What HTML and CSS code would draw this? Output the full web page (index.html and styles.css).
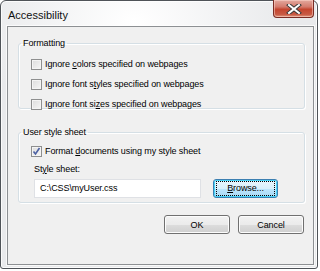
FILE: index.html
```html
<!DOCTYPE html>
<html lang="en">
<head>
    <meta charset="UTF-8">
    <title>Accessibility</title>
    <link rel="stylesheet" href="styles.css">
</head>
<body>
    <!-- Dialog window -->
    <div class="window">
        <div class="titlebar">
            <span class="title">Accessibility</span>
            <button class="close" type="button" aria-label="Close">
                <svg width="16" height="10" viewBox="0 0 16 10">
                    <path d="M3 1 L13 9 M13 1 L3 9" stroke="#3a3a3a" stroke-width="4" stroke-linecap="square"/>
                    <path d="M3 1 L13 9 M13 1 L3 9" stroke="#ffffff" stroke-width="2" stroke-linecap="square"/>
                </svg>
            </button>
        </div>

        <div class="client">
            <fieldset class="group group-format">
                <legend>Formatting</legend>
                <label class="check-row"><span class="box"></span><span class="text">Ignore <u>c</u>olors specified on webpages</span></label>
                <label class="check-row"><span class="box"></span><span class="text">Ignore font s<u>t</u>yles specified on webpages</span></label>
                <label class="check-row"><span class="box"></span><span class="text">Ignore font si<u>z</u>es specified on webpages</span></label>
            </fieldset>

            <fieldset class="group group-user">
                <legend>User style sheet</legend>
                <label class="check-row"><span class="box checked">
                    <svg width="9" height="9" viewBox="0 0 9 9"><path d="M1.5 4.5 L3.5 7 L7.5 1" fill="none" stroke="#4c61a3" stroke-width="1.6"/></svg>
                </span><span class="text">Format <u>d</u>ocuments using my style sheet</span></label>
                <div class="sheet">
                    <div class="sheet-label">St<u>y</u>le sheet:</div>
                    <div class="sheet-row">
                        <div class="textbox">C:\CSS\myUser.css</div>
                        <button class="btn btn-focus" type="button"><span class="focus-ring"><u>B</u>rowse...</span></button>
                    </div>
                </div>
            </fieldset>

            <div class="actions">
                <button class="btn" type="button">OK</button>
                <button class="btn" type="button">Cancel</button>
            </div>
        </div>
    </div>
</body>
</html>
```

FILE: styles.css
```css
/* General */
body {
    margin: 0;
    padding: 0;
    background-color: #ffffff;
    font-family: "Liberation Sans", Arial, sans-serif;
    font-size: 9px;
    letter-spacing: -0.1px;
    color: #000;
}

/* Window frame */
.window {
    width: 316px;
    height: 267px;
    border: 1px solid #4f5358;
    border-radius: 6px 6px 3px 3px;
    background: radial-gradient(ellipse 70% 60% at 42% 8%, #ffffff, #e9eaec 70%);
    background-color: #e8e9eb;
    box-shadow: inset 0 0 0 1px rgba(255, 255, 255, 0.8);
}

.titlebar {
    height: 25px;
    display: flex;
    align-items: flex-start;
    justify-content: space-between;
}

.title {
    font-size: 11px;
    letter-spacing: 0;
    padding: 8px 0 0 7px;
    color: #111;
}

.close {
    width: 41px;
    height: 18px;
    margin: -1px 3px 0 0;
    padding: 0;
    border: 1px solid #7a2c24;
    border-top: none;
    border-radius: 0 0 4px 4px;
    background: linear-gradient(#e3a99f 0%, #d47b6d 40%, #c4452f 55%, #c85a44 85%, #e09a82 100%);
    box-shadow: inset 0 0 0 1px rgba(255, 220, 210, 0.5);
    display: flex;
    align-items: center;
    justify-content: center;
}

/* Client area */
.client {
    width: 305px;
    height: 237px;
    margin-left: 6px;
    border: 1px solid #8d9093;
    background-color: #f0f0f0;
    box-shadow: 0 0 0 1px rgba(255, 255, 255, 0.7);
    display: flex;
    flex-direction: column;
}

/* Group boxes */
.group {
    margin: 0 8px 0 10px;
    padding: 0 0 0 12px;
    border: 1px solid #d5dfe5;
    border-radius: 3px;
    box-shadow: inset 1px 1px 0 #ffffff, 1px 1px 0 #ffffff;
    min-width: 0;
}

.group legend {
    margin-left: -10px;
    padding: 0 2px;
    line-height: 12px;
}

.group-format {
    margin-top: 10px;
    height: 70px;
}

.group-format .check-row:first-of-type {
    margin-top: 5px;
}

.group-user {
    margin-top: 17px;
    height: 75px;
}

.group-user .check-row {
    margin-top: 3px;
}

/* Checkbox rows */
.check-row {
    display: flex;
    align-items: center;
    height: 20px;
}

.box {
    width: 9px;
    height: 9px;
    margin-right: 3px;
    border: 1px solid #8e8f8f;
    background: linear-gradient(135deg, #dcdcdc, #f6f6f6);
    box-shadow: inset 0 0 0 1px #f4f4f4;
    display: flex;
    align-items: center;
    justify-content: center;
}

.box.checked svg {
    display: block;
}

/* Style sheet picker */
.sheet {
    padding-left: 3px;
}

.sheet-label {
    line-height: 12px;
    margin-top: 2px;
}

.sheet-row {
    display: flex;
    align-items: center;
    margin-top: 4px;
}

.textbox {
    width: 160px;
    height: 17px;
    padding-left: 5px;
    border: 1px solid #dfe1e5;
    background-color: #ffffff;
    line-height: 17px;
}

/* Buttons */
.btn {
    width: 66px;
    height: 19px;
    padding: 0;
    border: 1px solid #707070;
    border-radius: 3px;
    background: linear-gradient(#f2f2f2 0%, #ebebeb 50%, #dddddd 51%, #cfcfcf 100%);
    box-shadow: inset 0 0 0 1px #fcfcfc;
    font-family: "Liberation Sans", Arial, sans-serif;
    font-size: 9px;
    letter-spacing: -0.1px;
    color: #000;
}

.btn-focus {
    margin-left: 12px;
    width: 65px;
    border-color: #3c7fb1;
    background: linear-gradient(#eaf6fd 0%, #d9f0fc 50%, #bee6fd 51%, #a7d9f5 100%);
    box-shadow: inset 0 0 0 1px #48d3f7;
    display: flex;
    align-items: center;
    justify-content: center;
}

.focus-ring {
    display: block;
    width: 57px;
    height: 13px;
    line-height: 13px;
    border: 1px dotted #000;
}

.actions {
    display: flex;
    justify-content: flex-end;
    gap: 8px;
    margin: 12px 9px 0 0;
}
```
